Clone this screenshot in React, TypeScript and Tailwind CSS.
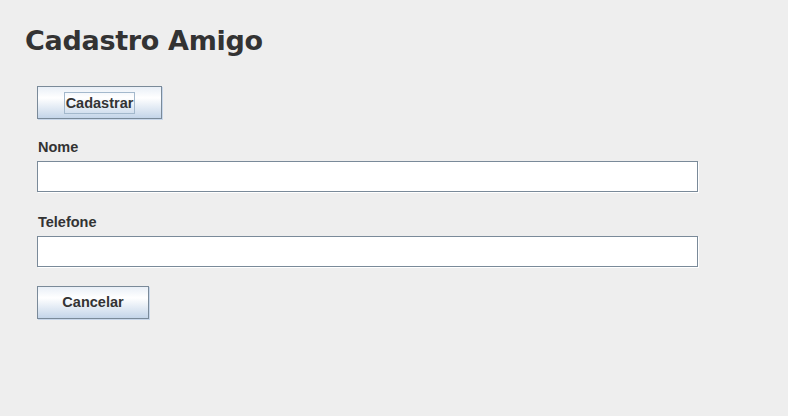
const inputClass =
    "h-[31px] w-[661px] border border-[#7a8a99] bg-white shadow-[1px_1px_0_#ffffff] outline-none";

const buttonClass =
    "flex items-center justify-center border border-[#7a8a99] bg-[linear-gradient(to_bottom,#e9eff7_0%,#ffffff_35%,#c4d5e9_100%)] shadow-[1px_1px_0_#c8d7ea] text-[14.5px] font-bold text-[#333333]";

const labelClass = "pl-[1px] text-[14.5px] font-bold leading-[17px] text-[#333333]";

export default function App() {
    return (
        <div className="min-h-[416px] w-[788px] bg-[#eeeeee] font-['Liberation_Sans',Arial,sans-serif]">
            <h1 className="pl-[25px] pt-[21px] font-['DejaVu_Sans',sans-serif] text-[27px] font-bold leading-[39px] tracking-[-0.3px] text-[#333333]">
                Cadastro Amigo
            </h1>
            <div className="flex flex-col pl-[37px] pt-[26px]">
                <button className={`${buttonClass} h-[33px] w-[125px]`}>
                    <span className="border border-[#a3b8cc] px-[1px] leading-[20px]">
                        Cadastrar
                    </span>
                </button>
                <label className={`${labelClass} mt-[20px]`}>Nome</label>
                <input className={`${inputClass} mt-[5px]`} />
                <label className={`${labelClass} mt-[22px]`}>Telefone</label>
                <input className={`${inputClass} mt-[5px]`} />
                <button className={`${buttonClass} mt-[19px] h-[33px] w-[112px]`}>
                    Cancelar
                </button>
            </div>
        </div>
    );
}
